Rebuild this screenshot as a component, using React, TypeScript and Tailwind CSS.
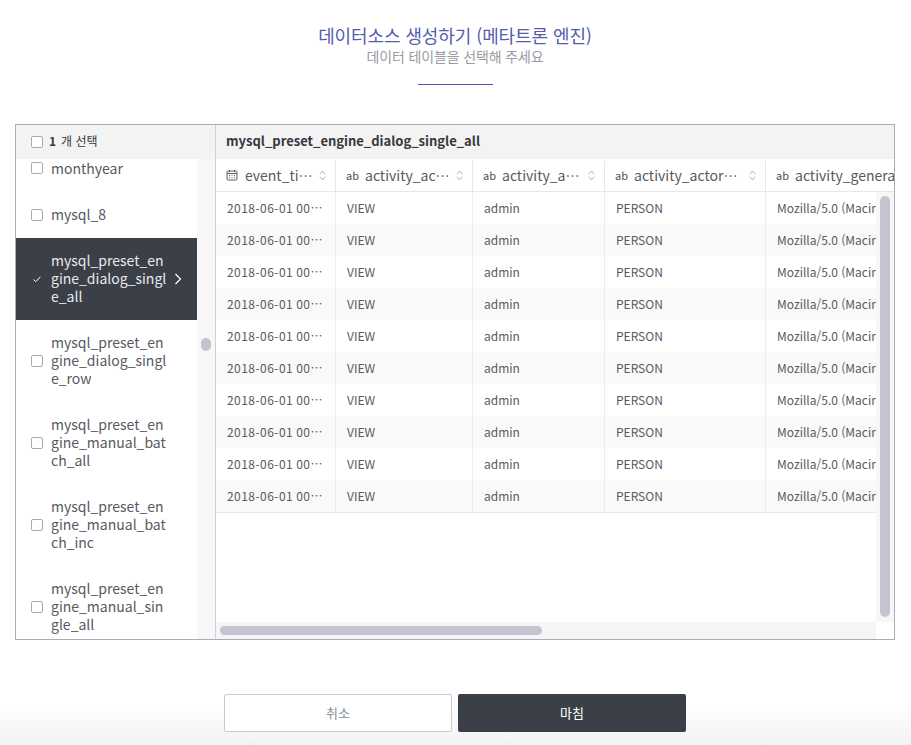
import React from 'react';

const font = "font-['Noto_Sans_CJK_KR','Noto_Sans',sans-serif]";

const tables = [
  'mysql_preset_engine_dialog_single_row',
  'mysql_preset_engine_manual_batch_all',
  'mysql_preset_engine_manual_batch_inc',
  'mysql_preset_engine_manual_single_all',
];

const columns = [
  { name: 'event_ti⋯', width: 'w-[120px]', value: '2018-06-01 00⋯', time: true },
  { name: 'activity_ac⋯', width: 'w-[137px]', value: 'VIEW' },
  { name: 'activity_a⋯', width: 'w-[132px]', value: 'admin' },
  { name: 'activity_actor⋯', width: 'w-[161px]', value: 'PERSON' },
  { name: 'activity_genera', width: 'w-[110px]', value: 'Mozilla/5.0 (Macir', last: true },
];

const rows = [0, 1, 2, 3, 4, 5, 6, 7, 8, 9];

const Checkbox = () => <span className="block w-3 h-3 shrink-0 rounded-[2px] border border-[#a9a9b3] bg-white" />;

const SortIcon = () => (
  <svg width="7" height="11" viewBox="0 0 7 11" fill="none" stroke="#a6a7ae" strokeWidth="0.9" strokeLinecap="round" strokeLinejoin="round" className="shrink-0">
    <path d="M1 4l2.5-3L6 4M1 7l2.5 3L6 7" />
  </svg>
);

const CalendarIcon = () => (
  <svg width="12" height="12" viewBox="0 0 12 12" fill="none" stroke="#4b4e57" strokeWidth="0.9" className="shrink-0">
    <rect x="1" y="2" width="10" height="9" rx="1" />
    <path d="M1 4.5h10M3.5 1v2M8.5 1v2" />
    <path d="M3 6.5h1M5.5 6.5h1M8 6.5h1M3 8.7h1M5.5 8.7h1M8 8.7h1" />
  </svg>
);

const App: React.FC = () => {
  return (
    <div lang="ko" className={`${font} relative w-[911px] h-[745px] overflow-hidden bg-white`}>
      <div className="absolute bottom-0 left-0 right-0 h-[40px] bg-gradient-to-b from-white to-[#f2f2f3]" />
      <div className="relative flex flex-col items-center">
        <h1 className="mt-[23px] mr-[1px] text-[18px] leading-[24px] tracking-[-0.1px] text-[#545cae]">데이터소스 생성하기 (메타트론 엔진)</h1>
        <p className="mr-[1px] text-[14px] leading-[18px] tracking-[-0.15px] text-[#9a9aa2]">데이터 테이블을 선택해 주세요</p>
        <div className="mt-[19px] mr-[1px] w-[75px] h-px bg-[#4d56b3]" />

        <div className="mt-[39px] mr-[1px] flex w-[880px] h-[516px] border border-[#adabba] bg-white">
          <div className="flex flex-col w-[200px] shrink-0 border-r border-[#d0d0d6]">
            <div className="flex items-center h-[34px] pl-[15px] bg-[#f3f3f4] text-[12px] text-[#35393f]">
              <Checkbox />
              <span className="ml-[6px] mb-[2px] font-bold">1</span>
              <span className="ml-[5px] mb-[2px]">개 선택</span>
            </div>
            <div className="relative flex flex-1 min-h-0 overflow-hidden">
              <div className="w-[181px] shrink-0 text-[14px] leading-[18px] text-[#565a62]">
                <div className="flex items-start h-[33px] pl-[15px]">
                  <span className="mt-[3px]"><Checkbox /></span>
                  <span className="ml-[8px]">monthyear</span>
                </div>
                <div className="flex items-center h-[46px] pl-[15px]">
                  <Checkbox />
                  <span className="ml-[8px] mb-[2px]">mysql_8</span>
                </div>
                <div className="flex items-center h-[82px] pl-[15px] bg-[#3b3f48] text-[#e9e9ec]">
                  <svg width="12" height="12" viewBox="0 0 12 12" fill="none" stroke="#fff" strokeWidth="1" className="shrink-0">
                    <path d="M2.5 6.5l2.3 2.2 4.6-5" />
                  </svg>
                  <span className="ml-[8px] mb-[2px] w-[118px] break-all">mysql_preset_engine_dialog_single_all</span>
                  <svg width="8" height="12" viewBox="0 0 8 12" fill="none" stroke="#fff" strokeWidth="1.2" className="ml-[5px] shrink-0">
                    <path d="M1.5 1l5 5-5 5" />
                  </svg>
                </div>
                {tables.map((t) => (
                  <div key={t} className="flex items-center h-[82px] pl-[15px]">
                    <Checkbox />
                    <span className="ml-[8px] mb-[2px] w-[118px] break-all">{t}</span>
                  </div>
                ))}
              </div>
              <div className="flex-1 bg-[#f7f7f8] pt-[179px] pl-[4px]">
                <div className="w-[10px] h-[13px] rounded-full bg-[#c4c4d0]" />
              </div>
            </div>
          </div>

          <div className="flex flex-col flex-1 min-w-0">
            <div className="flex items-center h-[34px] pl-[10px] pb-[2px] bg-[#f3f3f4] text-[13px] font-bold text-[#35393f]">
              mysql_preset_engine_dialog_single_all
            </div>
            <div className="relative flex-1 min-h-0 overflow-hidden">
              <div className="flex h-[33px] border-b border-[#e7e7ea] pt-[2px]">
                {columns.map((c) => (
                  <div key={c.name} className={`flex items-center shrink-0 ${c.width} pl-[10px] pb-[2px] text-[14px] text-[#565a62] ${c.last ? '' : 'pr-[9px] border-r border-[#e7e7ea]'}`}>
                    {c.time ? <CalendarIcon /> : <span className="text-[11px] text-[#4b4f57] shrink-0">ab</span>}
                    <span className={`flex-1 whitespace-nowrap ${c.time ? 'ml-[7px]' : 'ml-[6px]'}`}>{c.name}</span>
                    {!c.last && <SortIcon />}
                  </div>
                ))}
              </div>
              <div className="border-b border-[#e7e7ea]">
                {rows.map((r) => (
                  <div key={r} className={`flex h-[32px] ${r % 2 ? 'bg-[#f9f9f9]' : 'bg-white'}`}>
                    {columns.map((c) => (
                      <div key={c.name} className={`shrink-0 ${c.width} pl-[11px] text-[12px] leading-[32px] text-[#565a62] whitespace-nowrap ${c.time ? 'tracking-[0.45px]' : ''} ${c.last ? '' : 'border-r border-[#ececee]'}`}>
                        {c.value}
                      </div>
                    ))}
                  </div>
                ))}
              </div>

              <div className="absolute top-[33px] right-0 bottom-[17px] w-[18px] bg-[#f7f7f8] pt-[4px] pl-[4px]">
                <div className="w-[10px] h-[421px] rounded-full bg-[#c4c4d0]" />
              </div>
              <div className="absolute left-0 right-[18px] bottom-0 h-[17px] bg-[#f6f6f7] pt-[4px] pl-[4px]">
                <div className="w-[322px] h-[9px] rounded-full bg-[#c4c4d0]" />
              </div>
              <div className="absolute right-0 bottom-0 w-[18px] h-[17px] bg-white" />
            </div>
          </div>
        </div>

        <div className="mt-[54px] mr-[1px] flex gap-[6px]">
          <button className="w-[228px] h-[38px] rounded-[2px] border border-[#c9c9d1] bg-white text-[13px] text-[#8d8e95]">취소</button>
          <button className="w-[228px] h-[38px] rounded-[2px] bg-[#3b3f48] text-[13px] text-white">마침</button>
        </div>
      </div>
    </div>
  );
};

export default App;
